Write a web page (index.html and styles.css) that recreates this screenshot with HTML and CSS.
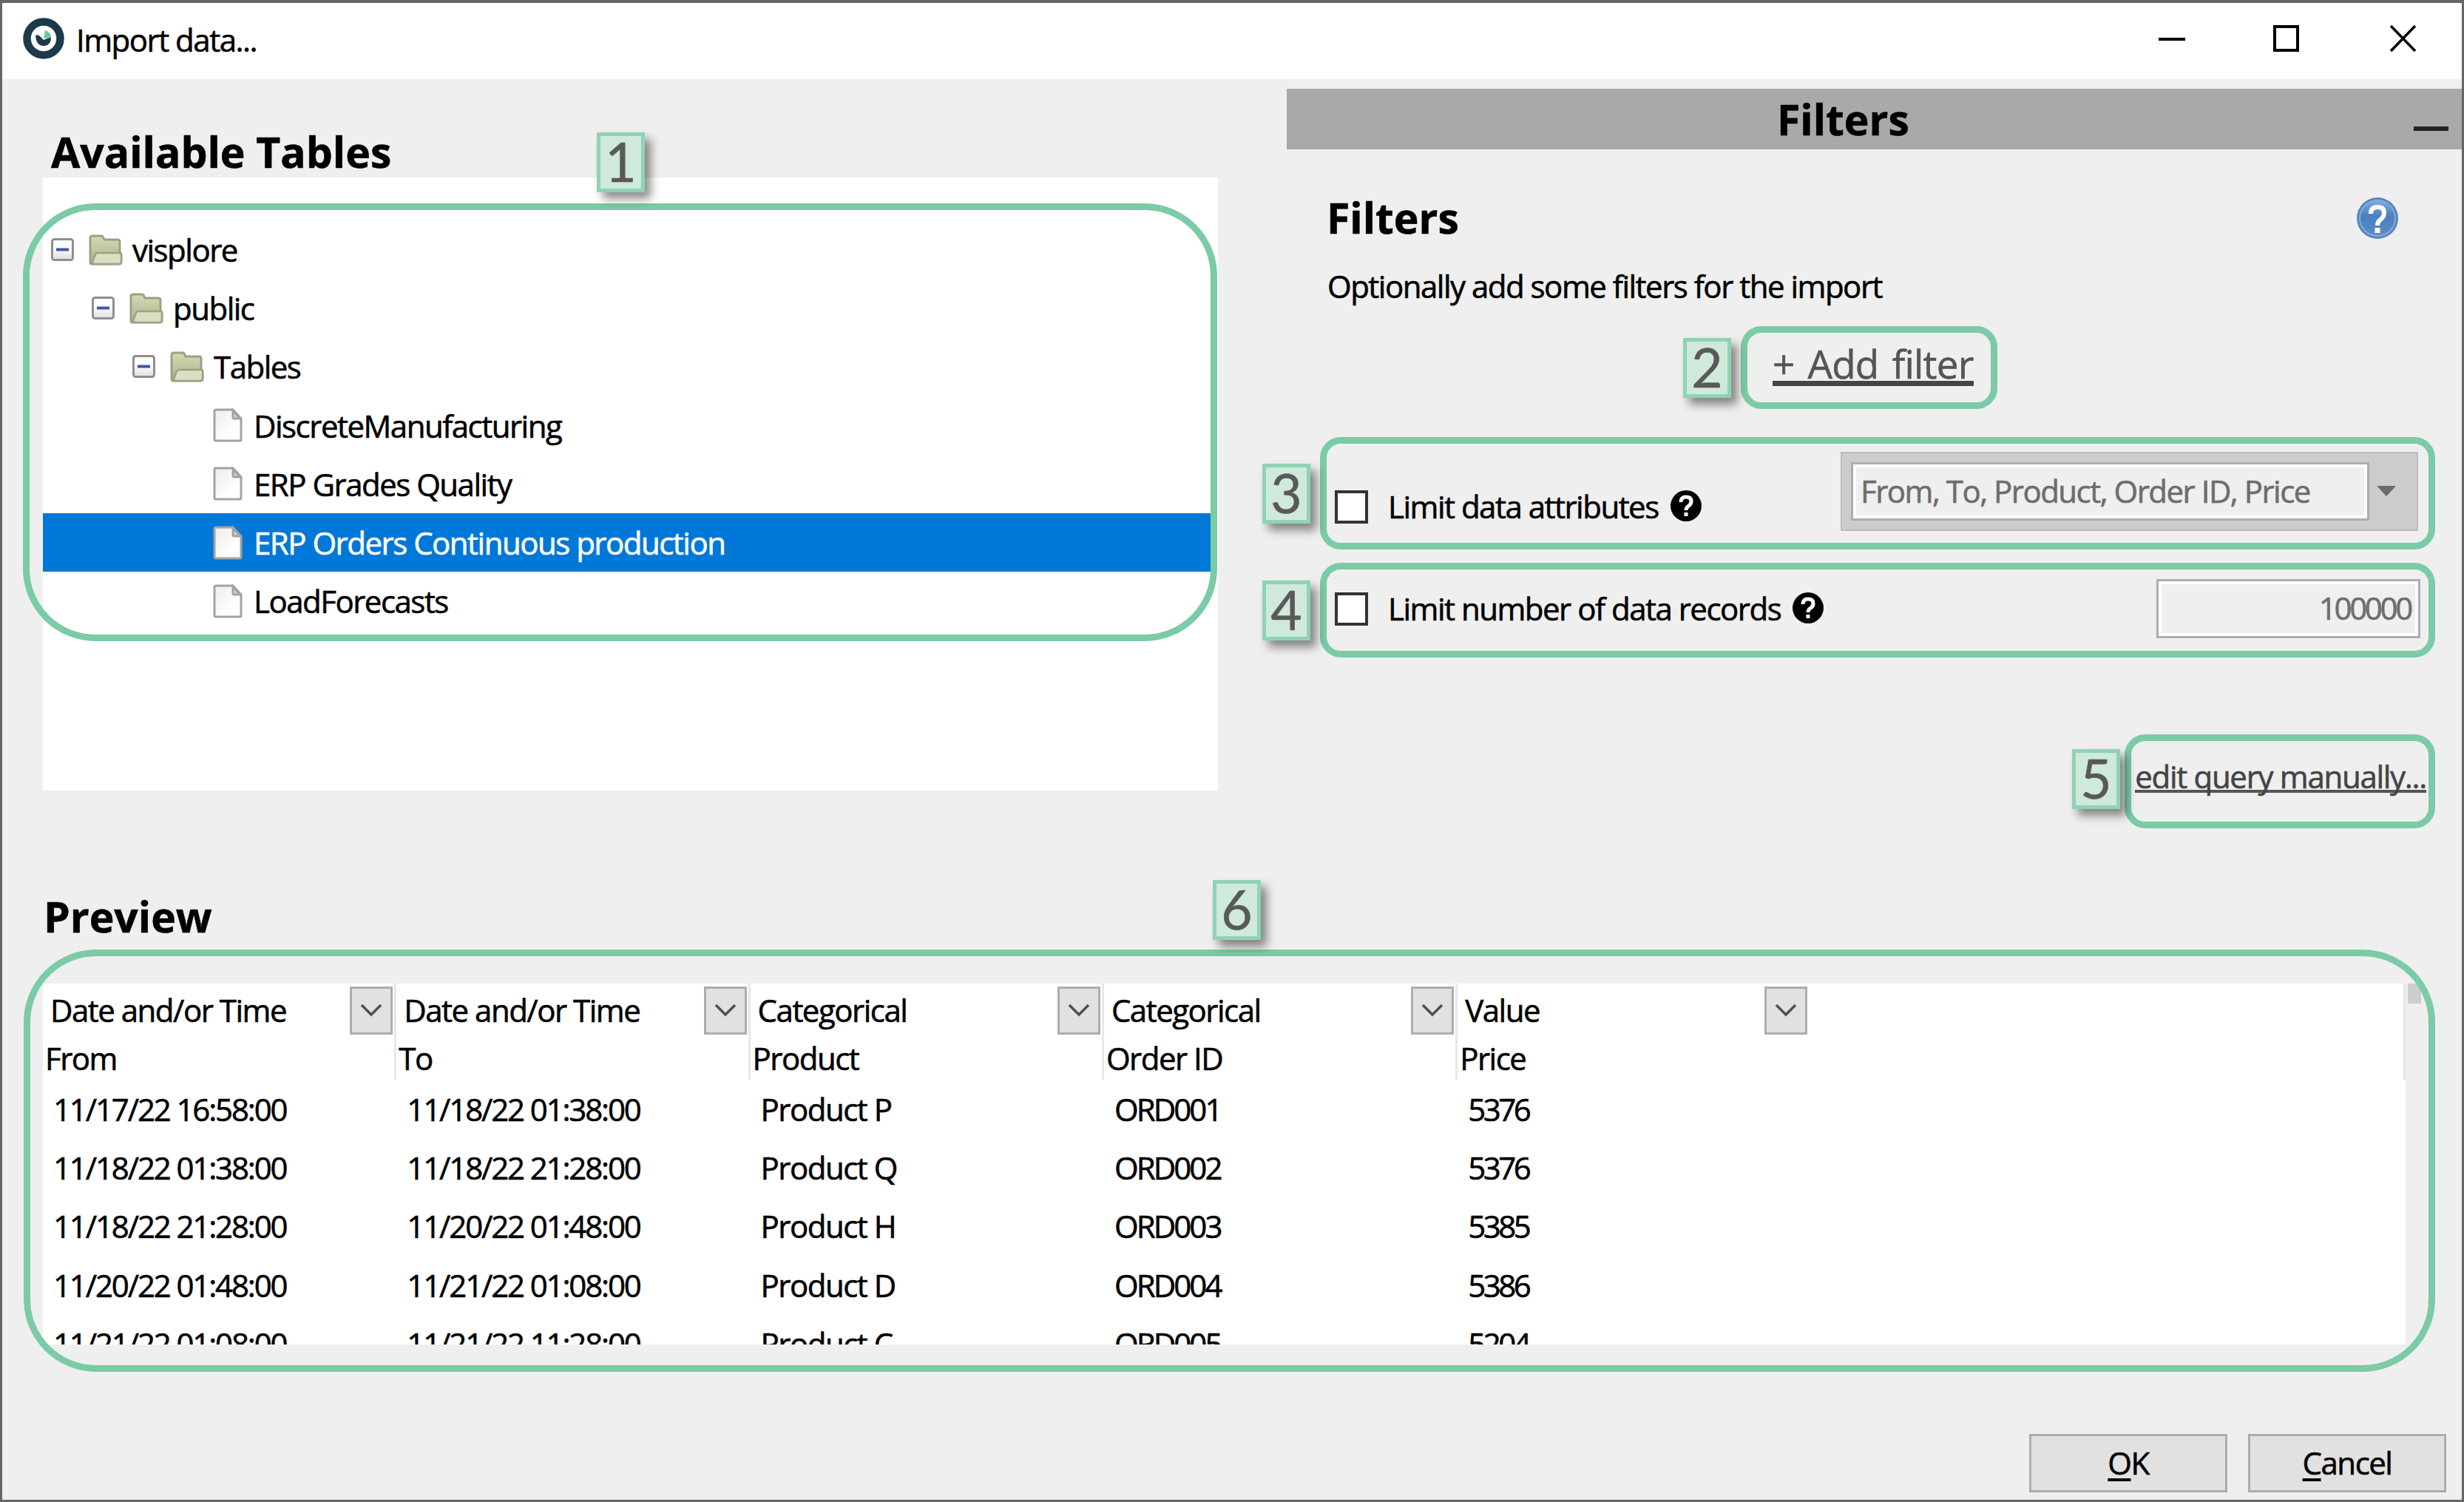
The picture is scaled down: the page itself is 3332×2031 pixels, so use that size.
FILE: index.html
```html
<!DOCTYPE html>
<html lang="en">
<head>
    <meta charset="UTF-8">
    <meta name="viewport" content="width=device-width, initial-scale=1.0">
    <title>Import data...</title>
    <link rel="stylesheet" href="styles.css">
</head>
<body>
    <!-- shared icons -->
    <svg class="defs" width="0" height="0">
        <defs>
            <linearGradient id="folderFill" x1="0" y1="0" x2="0" y2="1">
                <stop offset="0" stop-color="#d6dab4"/>
                <stop offset="1" stop-color="#acb08c"/>
            </linearGradient>
            <linearGradient id="fileFill" x1="1" y1="1" x2="0" y2="0">
                <stop offset="0.3" stop-color="#ffffff"/>
                <stop offset="1" stop-color="#ebebe9"/>
            </linearGradient>
            <linearGradient id="boxFill" x1="0" y1="0" x2="0" y2="1">
                <stop offset="0.4" stop-color="#ffffff"/>
                <stop offset="1" stop-color="#dedede"/>
            </linearGradient>
            <linearGradient id="helpFill" x1="0" y1="0" x2="0" y2="1">
                <stop offset="0" stop-color="#7fa9d8"/>
                <stop offset="0.45" stop-color="#4a80c0"/>
                <stop offset="1" stop-color="#5b8cc8"/>
            </linearGradient>
        </defs>
        <symbol id="minus" viewBox="0 0 31 31">
            <rect x="1.5" y="1.5" width="28" height="28" rx="3" fill="url(#boxFill)" stroke="#8f8f8f" stroke-width="3"/>
            <rect x="7" y="13.5" width="17" height="4" fill="#4058a8"/>
        </symbol>
        <symbol id="folder" viewBox="0 0 46 42">
            <path d="M2 37V5q0-3 3-3h12q2 0 3 3l1 2h18q3 0 3 3v15q2 0 2 3v9q0 3-3 3H4q-2 0-2-3z" fill="url(#folderFill)" stroke="#9da185" stroke-width="3"/>
            <path d="M5 37l4-10q1-2 3-2h30q2 0 2 3v9q0 3-3 3H6z" fill="#dbdfc2" stroke="#9da185" stroke-width="2.500"/>
        </symbol>
        <symbol id="file" viewBox="0 0 40 46">
            <path d="M2 4q0-2 2-2h23l11 12v28q0 2-2 2H4q-2 0-2-2z" fill="url(#fileFill)" stroke="#a3a3a0" stroke-width="3"/>
            <path d="M27 3v9q0 2 2 2h8z" fill="#d2d2cf" stroke="#a3a3a0" stroke-width="3"/>
        </symbol>
        <symbol id="question" viewBox="0 0 42 42">
            <circle cx="21" cy="21" r="21" fill="#000"/>
            <path d="M14 16q0-7 7-7t7 6q0 4-4 6.500q-3 2-3 5.500" fill="none" stroke="#fff" stroke-width="5"/>
            <rect x="18.500" y="30" width="5" height="5" fill="#fff"/>
        </symbol>
        <symbol id="chevron" viewBox="0 0 30 18">
            <path d="M2 2l13 13L28 2" fill="none" stroke="#505050" stroke-width="3.500"/>
        </symbol>
    </svg>

    <div class="window">
        <header class="title-bar">
            <svg class="app-icon" viewBox="0 0 56 56">
                <circle cx="28" cy="28" r="22.500" fill="#fff" stroke="#1c3a4a" stroke-width="10.500"/>
                <path d="M17 24q3-2 6 1l5 5 10-4q0 12-10 12T17 24z" fill="#1c3a4a"/>
                <path d="M28 28l2-11q8 2 8 10z" fill="#6cc79f"/>
            </svg>
            <span class="title">Import data...</span>
            <svg class="window-buttons" viewBox="0 0 350 40">
                <path d="M0 19h36" stroke="#000" stroke-width="4"/>
                <rect x="157" y="2" width="31" height="32" fill="none" stroke="#000" stroke-width="4"/>
                <path d="M314 1l33 34M347 1l-33 34" stroke="#000" stroke-width="3.500"/>
            </svg>
        </header>

        <div class="top">
            <section class="tables">
                <h2>Available Tables</h2>
                <div class="tree">
                    <div class="node level-0"><svg class="expander"><use href="#minus"/></svg><svg class="folder"><use href="#folder"/></svg><span>visplore</span></div>
                    <div class="node level-1"><svg class="expander"><use href="#minus"/></svg><svg class="folder"><use href="#folder"/></svg><span>public</span></div>
                    <div class="node level-2"><svg class="expander"><use href="#minus"/></svg><svg class="folder"><use href="#folder"/></svg><span>Tables</span></div>
                    <div class="node level-3"><svg class="file"><use href="#file"/></svg><span>DiscreteManufacturing</span></div>
                    <div class="node level-3"><svg class="file"><use href="#file"/></svg><span>ERP Grades Quality</span></div>
                    <div class="node level-3 selected"><svg class="file"><use href="#file"/></svg><span>ERP Orders Continuous production</span></div>
                    <div class="node level-3"><svg class="file"><use href="#file"/></svg><span>LoadForecasts</span></div>
                </div>
            </section>

            <section class="filters">
                <div class="filters-bar"><h2>Filters</h2><span class="collapse"></span></div>
                <div class="filters-body">
                    <div class="filters-head">
                        <h2>Filters</h2>
                        <svg class="help" viewBox="0 0 56 56">
                            <circle cx="28" cy="28" r="28" fill="#5585c2"/>
                            <circle cx="28" cy="28" r="24" fill="url(#helpFill)" stroke="#86abd8" stroke-width="2"/>
                            <path d="M19 22q0-9 9-9t9 8q0 5-5 9-4 3-4 8" fill="none" stroke="#fff" stroke-width="6"/>
                            <rect x="24.500" y="41" width="7" height="7" fill="#fff"/>
                        </svg>
                    </div>
                    <p class="hint">Optionally add some filters for the import</p>
                    <a class="add-filter">+ Add filter</a>
                    <div class="limit limit-attributes">
                        <label><span class="checkbox"></span><span>Limit data attributes</span><svg class="question"><use href="#question"/></svg></label>
                        <div class="combo">
                            <div class="field">From, To, Product, Order ID, Price</div>
                            <span class="arrow"></span>
                        </div>
                    </div>
                    <div class="limit limit-records">
                        <label><span class="checkbox"></span><span>Limit number of data records</span><svg class="question"><use href="#question"/></svg></label>
                        <div class="field number">100000</div>
                    </div>
                    <a class="edit-query">edit query manually...</a>
                </div>
            </section>
        </div>

        <section class="preview">
            <h2>Preview</h2>
            <div class="table-wrap">
                <div class="table">
                    <div class="thead">
                        <div class="th"><div class="type">Date and/or Time<span class="drop"><svg><use href="#chevron"/></svg></span></div><div class="name">From</div></div>
                        <div class="th"><div class="type">Date and/or Time<span class="drop"><svg><use href="#chevron"/></svg></span></div><div class="name">To</div></div>
                        <div class="th"><div class="type">Categorical<span class="drop"><svg><use href="#chevron"/></svg></span></div><div class="name">Product</div></div>
                        <div class="th"><div class="type">Categorical<span class="drop"><svg><use href="#chevron"/></svg></span></div><div class="name">Order ID</div></div>
                        <div class="th last"><div class="type">Value<span class="drop"><svg><use href="#chevron"/></svg></span></div><div class="name">Price</div></div>
                    </div>
                    <div class="tr"><span class="date">11/17/22 16:58:00</span><span class="date">11/18/22 01:38:00</span><span>Product P</span><span class="order">ORD001</span><span class="value">5376</span></div>
                    <div class="tr"><span class="date">11/18/22 01:38:00</span><span class="date">11/18/22 21:28:00</span><span>Product Q</span><span class="order">ORD002</span><span class="value">5376</span></div>
                    <div class="tr"><span class="date">11/18/22 21:28:00</span><span class="date">11/20/22 01:48:00</span><span>Product H</span><span class="order">ORD003</span><span class="value">5385</span></div>
                    <div class="tr"><span class="date">11/20/22 01:48:00</span><span class="date">11/21/22 01:08:00</span><span>Product D</span><span class="order">ORD004</span><span class="value">5386</span></div>
                    <div class="tr"><span class="date">11/21/22 01:08:00</span><span class="date">11/21/22 11:28:00</span><span>Product C</span><span class="order">ORD005</span><span class="value">5204</span></div>
                </div>
                <div class="scrollbar"><span class="thumb"></span></div>
            </div>
        </section>

        <footer class="buttons">
            <div class="button"><span><u>O</u>K</span></div>
            <div class="button"><span><u>C</u>ancel</span></div>
        </footer>

        <!-- numbered callouts on top of the dialog -->
        <div class="callout callout-1"></div>
        <div class="callout callout-2"></div>
        <div class="callout callout-3"></div>
        <div class="callout callout-4"></div>
        <div class="callout callout-5"></div>
        <div class="callout callout-6"></div>
        <div class="badge badge-1">1</div>
        <div class="badge badge-2">2</div>
        <div class="badge badge-3">3</div>
        <div class="badge badge-4">4</div>
        <div class="badge badge-5">5</div>
        <div class="badge badge-6">6</div>
    </div>
</body>
</html>
```
FILE: styles.css
```css
* {
    box-sizing: border-box;
}
body {
    margin: 0;
    font-family: "Open Sans", "Noto Sans", sans-serif;
    font-size: 42px;
    letter-spacing: -1.5px;
    -webkit-text-stroke: 0.6px;
    line-height: 60px;
    color: #000;
    background-color: #efefef;
}
h2 {
    margin: 0;
    font-size: 57px;
    font-weight: 700;
    letter-spacing: 0;
    line-height: 70px;
}
.defs {
    position: absolute;
}
.window {
    position: relative;
    display: flex;
    flex-direction: column;
    width: 3332px;
    height: 2031px;
    border: 3px solid #666;
    border-top-width: 4px;
    background-color: #efefef;
    overflow: hidden;
    white-space: nowrap;
}

/* Title bar */
.title-bar {
    display: flex;
    align-items: center;
    flex: none;
    height: 103px;
    padding: 0 60px 7px 28px;
    background-color: #fff;
}
.app-icon {
    width: 56px;
    height: 56px;
    margin-right: 16px;
}
.title {
    padding-top: 4px;
}
.window-buttons {
    width: 350px;
    height: 40px;
    margin-left: auto;
    margin-top: 4px;
}

/* Upper half */
.top {
    display: flex;
    flex: none;
    height: 1097px;
}
.tables {
    width: 1589px;
    margin-left: 55px;
    padding-top: 63px;
}
.tables h2 {
    padding-left: 11px;
}
.tree {
    height: 829px;
    padding-top: 58px;
    background-color: #fff;
}
.node {
    display: flex;
    align-items: center;
    width: 1580px;
    height: 79.2px;
}
.node span {
    padding-top: 1px;
}
.node.selected {
    background-color: #0078d7;
    color: #fff;
}
.level-0 {
    padding-left: 11px;
}
.level-1 {
    padding-left: 66px;
}
.level-2 {
    padding-left: 121px;
}
.level-3 {
    padding-left: 230px;
}
.expander {
    width: 31px;
    height: 31px;
    margin-right: 20px;
}
.folder {
    width: 46px;
    height: 42px;
    margin-right: 13px;
}
.file {
    width: 40px;
    height: 46px;
    margin-right: 15px;
}

/* Filters */
.filters {
    width: 1589px;
    margin-left: 93px;
    padding-top: 13px;
}
.filters-bar {
    display: flex;
    justify-content: center;
    align-items: center;
    height: 82px;
    padding-left: 663px;
    background-color: #a9a9a9;
}
.filters-bar .collapse {
    width: 47px;
    height: 6px;
    margin: 26px 18px 0 auto;
    background-color: #222;
}
.filters-body {
    display: flex;
    flex-direction: column;
    padding: 57px 0 0 54px;
}
.filters-head {
    display: flex;
    justify-content: space-between;
    align-items: center;
    padding-right: 86px;
}
.help {
    width: 56px;
    height: 56px;
    margin-top: 2px;
}
.hint {
    margin: 28px 0 35px 1px;
}
.add-filter {
    align-self: flex-start;
    height: 70px;
    margin-left: 603px;
    font-size: 53px;
    letter-spacing: -0.8px;
    word-spacing: 5px;
    line-height: 79px;
    color: #555;
    border-bottom: 7px solid #444;
}
.limit {
    display: flex;
    justify-content: space-between;
    align-items: flex-end;
}
.limit label {
    display: flex;
    align-items: center;
    height: 66px;
    padding-left: 11px;
}
.checkbox {
    width: 45px;
    height: 45px;
    margin-right: 27px;
    border: 4px solid #333;
    background-color: #fff;
}
.question {
    width: 42px;
    height: 42px;
    margin-left: 16px;
    margin-top: -2px;
}
.limit-attributes {
    height: 107px;
    margin-top: 89px;
    padding-right: 59px;
}
.combo {
    display: flex;
    align-items: center;
    width: 781px;
    height: 107px;
    padding-left: 12px;
    background-color: #ccc;
    border: 2px solid #bdbdbd;
}
.field {
    width: 701px;
    height: 79px;
    padding: 0 10px;
    border: 3px solid #acacb4;
    box-shadow: inset 0 0 0 4px #fff;
    background-color: #efefef;
    color: #6d6d6d;
    line-height: 72px;
}
.arrow {
    margin: -2px 0 0 10px;
    border: 13px solid transparent;
    border-top: 14px solid #6a6a6a;
    border-bottom: 0;
}
.limit-records {
    height: 80px;
    margin-top: 65px;
    padding-right: 56px;
}
.limit-records label {
    height: 80px;
}
.number {
    width: 357px;
    height: 80px;
    letter-spacing: -3.3px;
    text-align: right;
}
.edit-query {
    align-self: flex-end;
    height: 53px;
    margin: 156px 48px 0 0;
    letter-spacing: -1.3px;
    line-height: 61px;
    color: #444;
    border-bottom: 4px solid #555;
}

/* Preview */
.preview {
    flex: none;
    height: 614px;
    padding-left: 55px;
}
.preview h2 {
    padding-left: 1px;
}
.table-wrap {
    display: flex;
    height: 488px;
    margin-top: 56px;
}
.table {
    width: 3195px;
    height: 488px;
    overflow: hidden;
    background-color: #fff;
}
.thead {
    display: flex;
    height: 130px;
    margin-bottom: 2px;
    border-right: 3px solid #e5e5e5;
}
.th {
    width: 478.3px;
    border-right: 3px solid #e8e8e8;
}
.th.last {
    border-right-color: transparent;
}
.type {
    display: flex;
    justify-content: space-between;
    align-items: center;
    height: 72px;
    padding-left: 10px;
    padding-right: 2px;
}
.drop {
    display: flex;
    justify-content: center;
    align-items: center;
    width: 58px;
    height: 65px;
    border: 3px solid #adadad;
    background-color: #e1e1e1;
}
.drop svg {
    width: 30px;
    height: 18px;
}
.name {
    padding-left: 3px;
    line-height: 58px;
}
.tr {
    display: flex;
    height: 79.2px;
    line-height: 75px;
}
.tr span {
    width: 478.3px;
    padding-left: 14px;
}
/* digits run narrower than the letters */
.tr .date {
    letter-spacing: -2.15px;
}
.tr .order {
    letter-spacing: -2.9px;
}
.tr .value {
    letter-spacing: -3.5px;
}
.scrollbar {
    padding-left: 3px;
}
.thumb {
    display: block;
    width: 18px;
    height: 27px;
    background-color: #cdcdcd;
}

/* Footer */
.buttons {
    display: flex;
    justify-content: flex-end;
    gap: 28px;
    padding: 121px 21px 0 0;
}
.button {
    width: 268px;
    height: 79px;
    border: 3px solid #adadad;
    background-color: #e1e1e1;
    text-align: center;
    line-height: 72px;
}
.button u {
    text-decoration-thickness: 4px;
    text-underline-offset: 5px;
}

/* Callouts (offsets are inside the window border) */
.callout {
    position: absolute;
    border: 9px solid #7acba6;
    border-radius: 28px;
}
.callout-1 {
    left: 28px;
    top: 271px;
    width: 1615px;
    height: 592px;
    border-radius: 98px;
}
.callout-2 {
    left: 2351px;
    top: 437px;
    width: 347px;
    height: 112px;
}
.callout-3 {
    left: 1782px;
    top: 587px;
    width: 1508px;
    height: 152px;
}
.callout-4 {
    left: 1782px;
    top: 757px;
    width: 1508px;
    height: 128px;
}
.callout-5 {
    left: 2870px;
    top: 989px;
    width: 420px;
    height: 127px;
}
.callout-6 {
    left: 29px;
    top: 1280px;
    width: 3261px;
    height: 571px;
    border-radius: 98px;
}
.badge {
    position: absolute;
    width: 65px;
    height: 81px;
    border: 5px solid #8fd3b5;
    background-color: #cfe9da;
    box-shadow: 8px 9px 12px rgba(0, 0, 0, 0.45);
    color: #595959;
    font-family: Lato, sans-serif;
    font-size: 73px;
    letter-spacing: 0;
    line-height: 69px;
    text-align: center;
}
.badge-1 {
    left: 804px;
    top: 175px;
}
.badge-2 {
    left: 2273px;
    top: 453px;
}
.badge-3 {
    left: 1704px;
    top: 623px;
}
.badge-4 {
    left: 1704px;
    top: 781px;
}
.badge-5 {
    left: 2799px;
    top: 1009px;
}
.badge-6 {
    left: 1637px;
    top: 1186px;
}
```
